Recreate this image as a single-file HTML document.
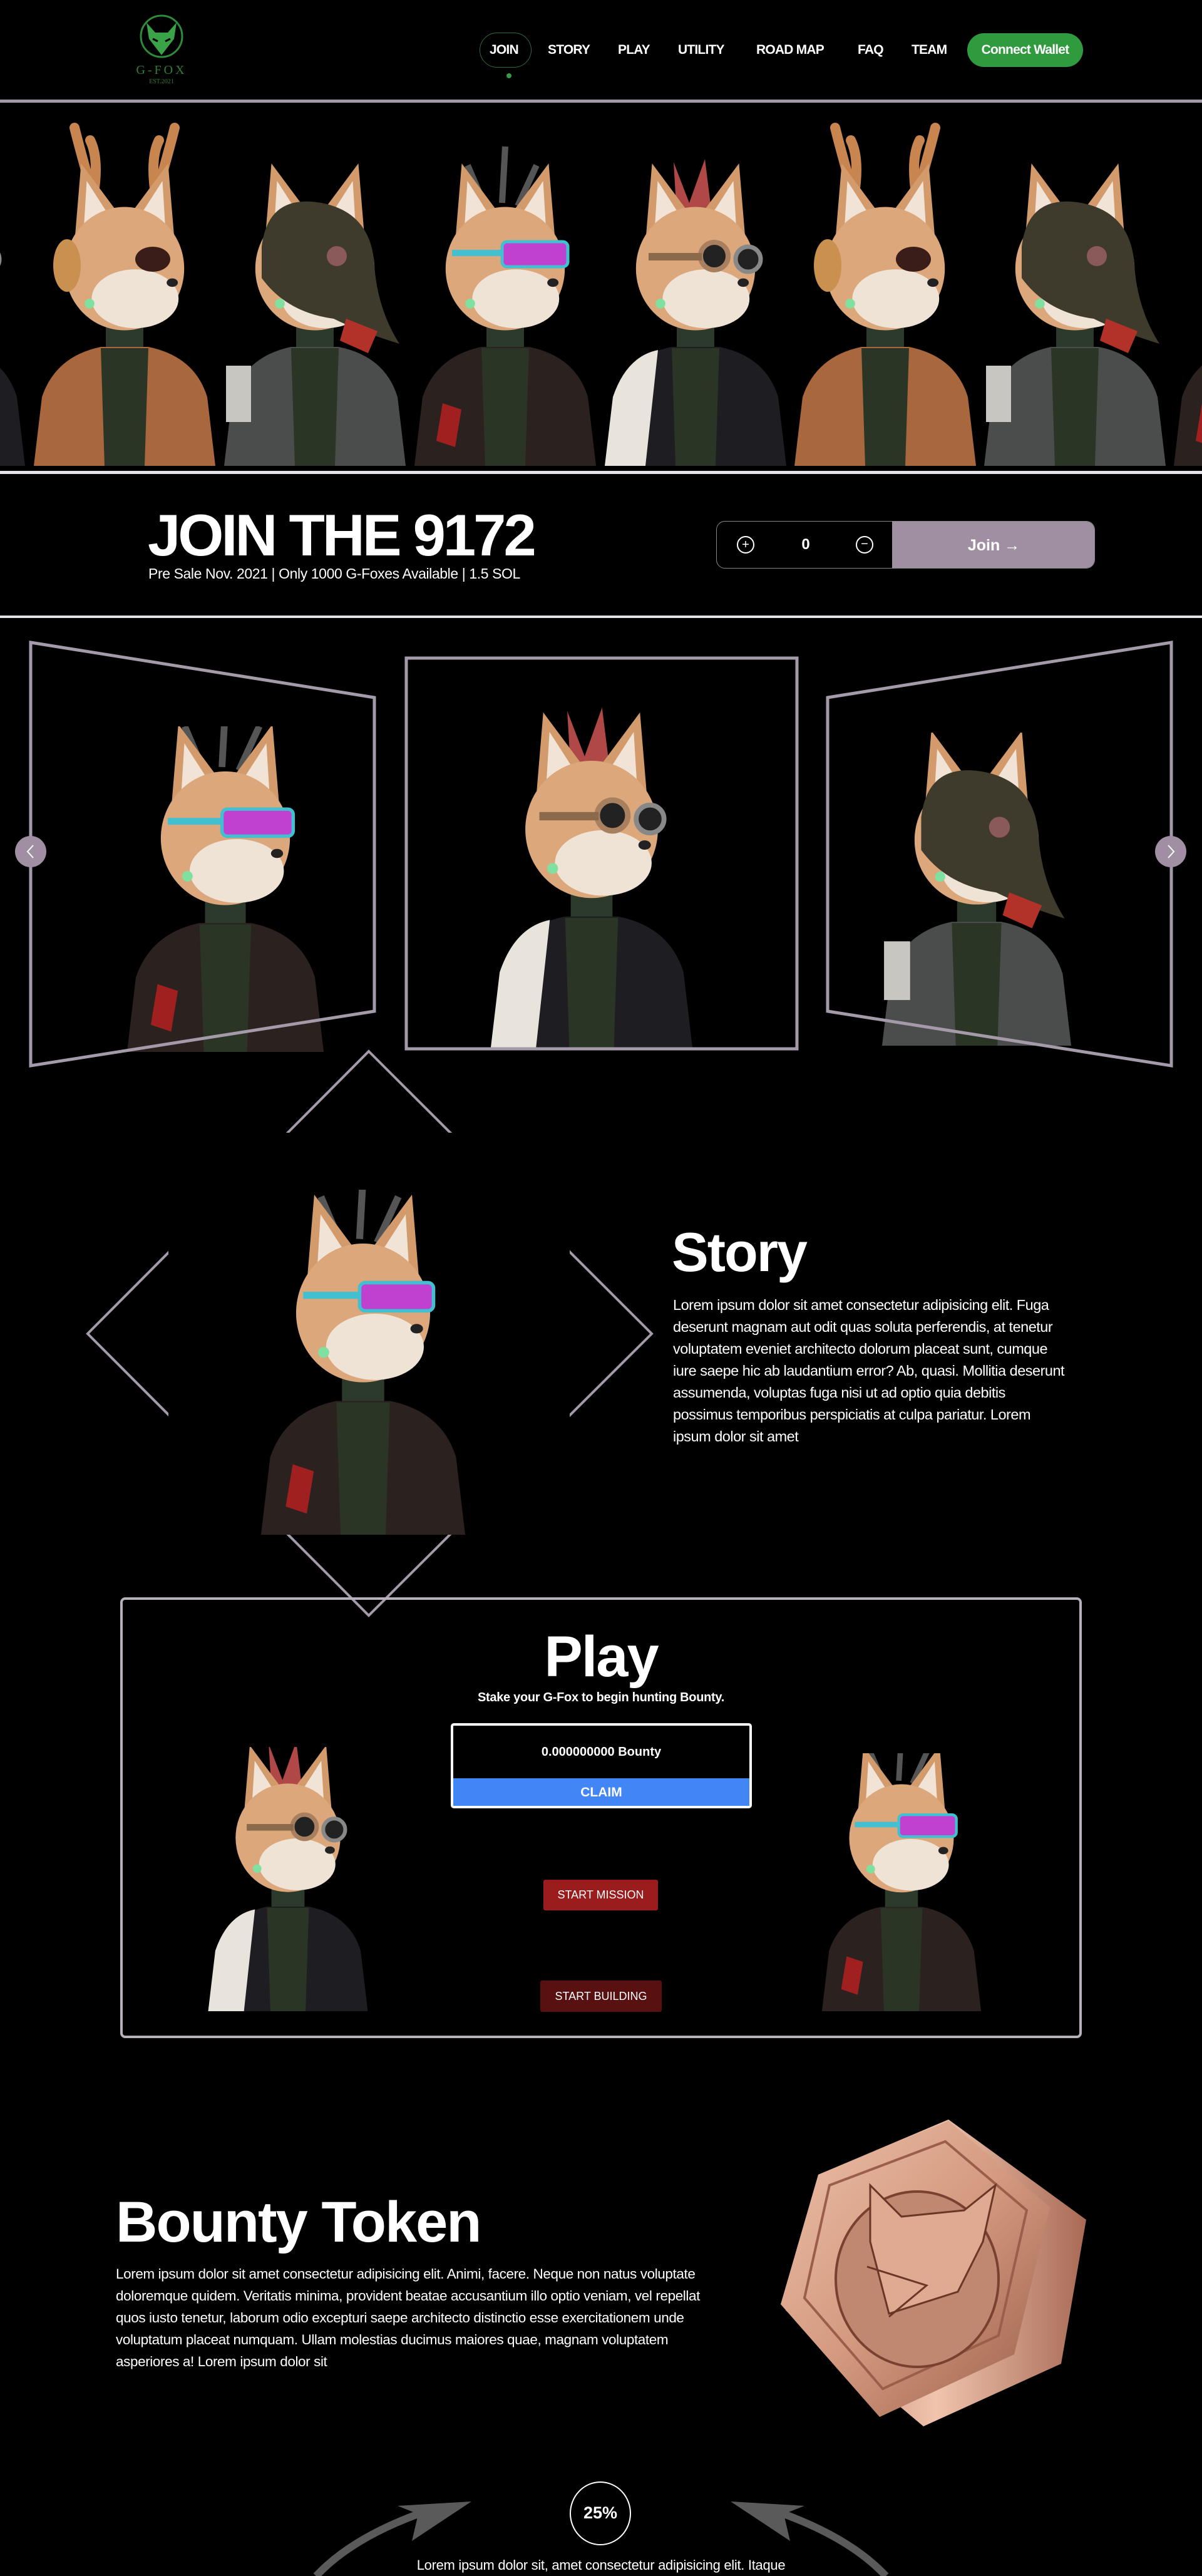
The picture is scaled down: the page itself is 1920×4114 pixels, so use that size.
<!DOCTYPE html>
<html><head><meta charset="utf-8"><style>
*{margin:0;padding:0;box-sizing:border-box}
body{width:1920px;height:4114px;background:#000;position:relative;overflow:hidden;font-family:"Liberation Sans",sans-serif;color:#fff}
.a{position:absolute}
.nav{font-weight:bold;font-size:21px;top:68px;letter-spacing:-0.8px}
.p{line-height:35px}
</style></head><body>
<svg width="0" height="0" style="position:absolute">
<defs>
<linearGradient id="cop" x1="0" y1="0" x2="1" y2="1"><stop offset="0" stop-color="#ecc0a8"/><stop offset="0.5" stop-color="#d49a80"/><stop offset="1" stop-color="#9a5e48"/></linearGradient>
<linearGradient id="cop2" x1="0" y1="0" x2="1" y2="0"><stop offset="0" stop-color="#b77660"/><stop offset="0.5" stop-color="#f0c4ad"/><stop offset="1" stop-color="#a86a55"/></linearGradient>
<g id="head">
<g transform="translate(150 265) scale(1.12) translate(-150 -265)">
<path d="M78 235 L88 115 L140 185Z M222 235 L212 115 L160 185Z" fill="#d39a6b"/>
<path d="M92 205 L96 140 L125 185Z M208 205 L204 140 L175 185Z" fill="#f1e4d6"/>
<ellipse cx="150" cy="265" rx="85" ry="88" fill="#dba77b"/>
<ellipse cx="165" cy="308" rx="62" ry="42" fill="#efe3d6"/>
<ellipse cx="218" cy="285" rx="8" ry="6" fill="#222"/>
<circle cx="100" cy="315" r="7" fill="#7fe0a0"/>
</g>
</g>
<g id="body1"><path d="M120 330 h60 v80 h-60z" fill="#2c3a2b"/><path d="M5 580 L18 470 Q40 405 112 390 L188 390 Q262 405 282 470 L295 580Z"/><path d="M112 392 L188 392 L182 580 L118 580Z" fill="#2b3526"/></g>
<g id="foxA"><use href="#body1" fill="#a8673d"/><path d="M100 150 Q80 80 70 40 M100 150 Q110 90 95 60 M200 150 Q220 80 230 40 M200 150 Q190 90 205 60" stroke="#c88550" stroke-width="16" fill="none" stroke-linecap="round"/><use href="#head"/><ellipse cx="195" cy="250" rx="28" ry="20" fill="#3a1c18"/><ellipse cx="58" cy="260" rx="22" ry="42" fill="#c99050"/></g>
<g id="foxB"><use href="#body1" fill="#4b4d4c"/><use href="#head"/><path d="M65 230 Q75 145 160 160 Q240 175 245 260 Q250 330 285 385 Q220 365 180 345 Q105 335 65 280Z" fill="#3f3b2c"/><path d="M200 345 l50 20 l-15 35 l-45 -20z" fill="#b2322a"/><circle cx="185" cy="245" r="16" fill="#8a5a5a"/><rect x="8" y="420" width="40" height="90" fill="#c8c6c0"/></g>
<g id="foxC"><use href="#body1" fill="#2b2220"/><path d="M120 170 L90 100 M145 160 L150 70 M170 165 L200 100" stroke="#555" stroke-width="10"/><use href="#head"/><rect x="145" y="222" width="105" height="40" rx="8" fill="#c040d0" stroke="#40c0d0" stroke-width="5"/><rect x="65" y="235" width="80" height="10" fill="#40c0d0"/><path d="M50 480 l30 10 l-10 60 l-30 -10z" fill="#a02020"/></g>
<g id="foxD"><use href="#body1" fill="#1d1d22"/><path d="M18 470 Q40 405 90 395 L70 580 L5 580Z" fill="#e8e4dc"/><path d="M120 180 L115 95 L140 160 L165 90 L175 170Z" fill="#b04848"/><use href="#head"/><circle cx="180" cy="245" r="22" fill="#222" stroke="#a88060" stroke-width="8"/><circle cx="234" cy="250" r="20" fill="#222" stroke="#888" stroke-width="7"/><rect x="75" y="240" width="85" height="12" fill="#8a6a4a"/></g>
</defs></svg>

<!-- NAV -->
<svg class="a" style="left:218px;top:18px" width="80" height="80" viewBox="0 0 80 80"><circle cx="40" cy="40" r="33" fill="none" stroke="#2e8b3a" stroke-width="3"/><path d="M16 18 L30 34 L50 34 L64 18 L60 44 L40 70 L20 44Z" fill="#3aa348"/><path d="M26 44 l8 4 M54 44 l-8 4" stroke="#000" stroke-width="3"/></svg>
<div class="a" style="left:210px;top:101px;width:96px;text-align:center;font-family:'Liberation Serif',serif;color:#2e7d38;font-size:20px;letter-spacing:4px">G-FOX</div>
<div class="a" style="left:210px;top:125px;width:96px;text-align:center;font-family:'Liberation Serif',serif;color:#2e7d38;font-size:10px">EST.2021</div>
<div class="a" style="left:766px;top:52px;width:83px;height:56px;border:1px solid #2e6b38;border-radius:28px"></div>
<div class="a" style="left:809px;top:117px;width:8px;height:8px;border-radius:50%;background:#3a9a48"></div>
<div class="a nav" style="left:782px">JOIN</div>
<div class="a nav" style="left:875px">STORY</div>
<div class="a nav" style="left:987px">PLAY</div>
<div class="a nav" style="left:1083px">UTILITY</div>
<div class="a nav" style="left:1208px">ROAD MAP</div>
<div class="a nav" style="left:1370px">FAQ</div>
<div class="a nav" style="left:1456px">TEAM</div>
<div class="a" style="left:1545px;top:53px;width:185px;height:54px;border-radius:27px;background:#2f9a3e;font-size:21px;line-height:54px;text-align:center;font-weight:bold;letter-spacing:-0.8px">Connect Wallet</div>
<div class="a" style="left:0;top:159px;width:1920px;height:5px;background:#a59aa9"></div>

<!-- BANNER -->
<svg class="a" style="left:0;top:164px" width="1920" height="580" viewBox="0 0 1920 580">
<g transform="translate(-255,0)"><use href="#foxD"/></g>
<g transform="translate(49,0)"><use href="#foxA"/></g>
<g transform="translate(353,0)"><use href="#foxB"/></g>
<g transform="translate(657,0)"><use href="#foxC"/></g>
<g transform="translate(961,0)"><use href="#foxD"/></g>
<g transform="translate(1264,0)"><use href="#foxA"/></g>
<g transform="translate(1567,0)"><use href="#foxB"/></g>
<g transform="translate(1870,0)"><use href="#foxC"/></g>
</svg>
<div class="a" style="left:0;top:752px;width:1920px;height:5px;background:#e6e2ea"></div>

<!-- JOIN -->
<div class="a" style="left:236px;top:800px;font-size:94px;font-weight:bold;letter-spacing:-4px;line-height:110px">JOIN THE 9172</div>
<div class="a" style="left:237px;top:903px;font-size:23px;letter-spacing:-0.4px">Pre Sale Nov. 2021 | Only 1000 G-Foxes Available | 1.5 SOL</div>
<div class="a" style="left:1144px;top:832px;width:605px;height:76px;border:1px solid #888;border-radius:14px;overflow:hidden">
<div class="a" style="left:280px;top:0;width:325px;height:76px;background:#a08fa3;font-weight:bold;font-size:25px;line-height:76px;text-align:center">Join &#8594;</div>
<div class="a" style="left:32px;top:23px;width:28px;height:28px;border:2px solid #fff;border-radius:50%;text-align:center;line-height:24px;font-size:20px">+</div>
<div class="a" style="left:127px;top:23px;width:30px;font-weight:bold;font-size:24px;text-align:center;line-height:28px">0</div>
<div class="a" style="left:222px;top:23px;width:28px;height:28px;border:2px solid #fff;border-radius:50%;text-align:center;line-height:22px;font-size:20px">&#8722;</div>
</div>
<div class="a" style="left:0;top:983px;width:1920px;height:4px;background:#e6e2ea"></div>

<!-- CAROUSEL -->
<svg class="a" style="left:0;top:1000px" width="1920" height="1600" viewBox="0 1000 1920 1600">
<svg x="150" y="1160" width="420" height="520" viewBox="-10 100 320 480"><use href="#foxC"/></svg>
<svg x="740" y="1130" width="410" height="545" viewBox="0 90 300 490"><use href="#foxD"/></svg>
<svg x="1370" y="1170" width="380" height="500" viewBox="0 100 300 480"><use href="#foxB"/></svg>
<polygon points="49,1026 598,1114 598,1615 49,1702" fill="none" stroke="#a59aa9" stroke-width="5"/>
<rect x="649" y="1051" width="624" height="624" fill="none" stroke="#a59aa9" stroke-width="5"/>
<polygon points="1322,1114 1871,1026 1871,1702 1322,1615" fill="none" stroke="#a59aa9" stroke-width="5"/>
<circle cx="49" cy="1360" r="25" fill="#a08fa3"/><path d="M53 1350 l-9 10 l9 10" stroke="#fff" stroke-width="2" fill="none"/>
<circle cx="1870" cy="1360" r="25" fill="#a08fa3"/><path d="M1866 1350 l9 10 l-9 10" stroke="#fff" stroke-width="2" fill="none"/>
<polygon points="589,1679 1041,2130 589,2580 140,2130" fill="none" stroke="#a59aa9" stroke-width="4"/>
<rect x="269" y="1809" width="641" height="642" fill="#000"/>
<svg x="330" y="1900" width="500" height="551" viewBox="-20 90 340 490"><use href="#foxC"/></svg>
</svg>

<!-- STORY -->
<div class="a" style="left:1073px;top:1950px;font-size:88px;font-weight:bold;line-height:100px;letter-spacing:-2px">Story</div>
<div class="a p" style="left:1075px;top:2067px;font-size:23.5px;letter-spacing:-0.5px">Lorem ipsum dolor sit amet consectetur adipisicing elit. Fuga<br>deserunt magnam aut odit quas soluta perferendis, at tenetur<br>voluptatem eveniet architecto dolorum placeat sunt, cumque<br>iure saepe hic ab laudantium error? Ab, quasi. Mollitia deserunt<br>assumenda, voluptas fuga nisi ut ad optio quia debitis<br>possimus temporibus perspiciatis at culpa pariatur. Lorem<br>ipsum dolor sit amet</div>

<!-- PLAY -->
<div class="a" style="left:192px;top:2551px;width:1536px;height:704px;border:4px solid #b8b0bc;border-radius:8px"></div>
<svg class="a" style="left:290px;top:2790px" width="340" height="422" viewBox="0 100 300 480"><use href="#foxD"/></svg>
<svg class="a" style="left:1260px;top:2800px" width="360" height="412" viewBox="0 110 300 470"><use href="#foxC"/></svg>
<div class="a" style="left:0;top:2596px;width:1920px;text-align:center;font-size:92px;font-weight:bold;line-height:100px;letter-spacing:-2px">Play</div>
<div class="a" style="left:0;top:2700px;width:1920px;text-align:center;font-size:20px;font-weight:bold;letter-spacing:-0.3px">Stake your G-Fox to begin hunting Bounty.</div>
<div class="a" style="left:720px;top:2752px;width:481px;height:136px;border:4px solid #fff;border-radius:5px;overflow:hidden">
<div style="height:84px;line-height:84px;text-align:center;font-weight:bold;font-size:20px">0.000000000 Bounty</div>
<div style="height:48px;line-height:46px;text-align:center;font-weight:bold;font-size:21px;background:#4285f4">CLAIM</div></div>
<div class="a" style="left:868px;top:3002px;width:183px;height:49px;background:#9b1c1c;border-radius:3px;text-align:center;line-height:49px;font-size:18px">START MISSION</div>
<div class="a" style="left:863px;top:3163px;width:194px;height:50px;background:#581010;border-radius:3px;text-align:center;line-height:50px;font-size:18px">START BUILDING</div>

<!-- BOUNTY -->
<div class="a" style="left:185px;top:3494px;font-size:92px;font-weight:bold;line-height:110px;letter-spacing:-2px">Bounty Token</div>
<div class="a p" style="left:185px;top:3614px;font-size:22.5px;letter-spacing:-0.4px">Lorem ipsum dolor sit amet consectetur adipisicing elit. Animi, facere. Neque non natus voluptate<br>doloremque quidem. Veritatis minima, provident beatae accusantium illo optio veniam, vel repellat<br>quos iusto tenetur, laborum odio excepturi saepe architecto distinctio esse exercitationem unde<br>voluptatum placeat numquam. Ullam molestias ducimus maiores quae, magnam voluptatem<br>asperiores a! Lorem ipsum dolor sit</div>
<svg class="a" style="left:1240px;top:3370px" width="520" height="540" viewBox="1240 3370 520 540">
<polygon points="1515,3385 1735,3545 1695,3775 1475,3875 1255,3690 1307,3473" fill="url(#cop2)"/>
<polygon points="1515,3387 1677,3525 1620,3760 1405,3860 1247,3680 1307,3473" fill="url(#cop)"/>
<polygon points="1510,3420 1640,3530 1595,3730 1410,3815 1285,3670 1325,3490" fill="none" stroke="#9a5e4a" stroke-width="4"/>
<ellipse cx="1465" cy="3640" rx="130" ry="140" fill="#c08870" stroke="#7a4030" stroke-width="4"/>
<path d="M1390 3580 L1390 3490 L1440 3540 L1540 3530 L1590 3490 L1570 3580 L1530 3660 L1420 3695 Z" fill="#e0aa92" stroke="#6a3626" stroke-width="3"/>
<path d="M1385 3620 L1480 3650 L1420 3700" fill="none" stroke="#6a3626" stroke-width="3"/>
</svg>

<!-- BOTTOM -->
<svg class="a" style="left:0;top:3940px" width="1920" height="174" viewBox="0 3940 1920 174">
<path d="M505 4114 Q560 4055 668 4015" stroke="#5a5a5a" stroke-width="12" fill="none"/>
<polygon points="753,3995 635,4002 668,4015 658,4058" fill="#5a5a5a"/>
<path d="M1415 4114 Q1360 4055 1252 4015" stroke="#5a5a5a" stroke-width="12" fill="none"/>
<polygon points="1167,3995 1285,4002 1252,4015 1262,4058" fill="#5a5a5a"/>
<ellipse cx="959" cy="4014" rx="48" ry="50" fill="none" stroke="#fff" stroke-width="2"/>
</svg>
<div class="a" style="left:909px;top:3998px;width:100px;text-align:center;font-weight:bold;font-size:27px">25%</div>
<div class="a" style="left:0;top:4084px;width:1920px;text-align:center;font-size:22px;letter-spacing:-0.3px">Lorem ipsum dolor sit, amet consectetur adipisicing elit. Itaque</div>
</body></html>
